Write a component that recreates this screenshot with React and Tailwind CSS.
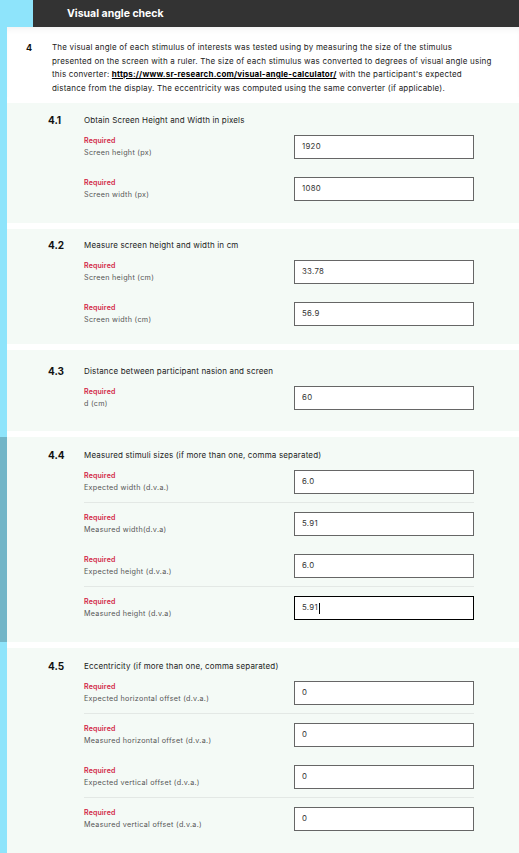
const sections = [
  {
    num: "4.1",
    title: "Obtain Screen Height and Width in pixels",
    items: [
      { label: "Screen height (px)", value: "1920" },
      { label: "Screen width (px)", value: "1080" },
    ],
    dividers: [],
    pt: "pt-[11px]",
    pb: "pb-[13px]",
  },
  {
    num: "4.2",
    title: "Measure screen height and width in cm",
    items: [
      { label: "Screen height (cm)", value: "33.78" },
      { label: "Screen width (cm)", value: "56.9" },
    ],
    dividers: [],
    pt: "pt-[10px]",
    pb: "pb-[9px]",
  },
  {
    num: "4.3",
    title: "Distance between participant nasion and screen",
    items: [{ label: "d (cm)", value: "60" }],
    dividers: [],
    pt: "pt-[15px]",
    pb: "pb-[12px]",
  },
  {
    num: "4.4",
    title: "Measured stimuli sizes (if more than one, comma separated)",
    items: [
      { label: "Expected width (d.v.a.)", value: "6.0" },
      { label: "Measured width(d.v.a)", value: "5.91" },
      { label: "Expected height (d.v.a.)", value: "6.0" },
      { label: "Measured height (d.v.a)", value: "5.91", focused: true },
    ],
    dividers: [0, 2],
    active: true,
    pt: "pt-[12px]",
    pb: "pb-[13px]",
  },
  {
    num: "4.5",
    title: "Eccentricity (if more than one, comma separated)",
    items: [
      { label: "Expected horizontal offset (d.v.a.)", value: "0" },
      { label: "Measured horizontal offset (d.v.a.)", value: "0" },
      { label: "Expected vertical offset (d.v.a.)", value: "0" },
      { label: "Measured vertical offset (d.v.a.)", value: "0" },
    ],
    dividers: [0, 2],
    pt: "pt-[12px]",
    pb: "pb-[24px]",
  },
];

function Item({ item, divider }) {
  return (
    <div
      className={
        "flex items-start pt-[9px] pb-[8px] border-b " +
        (divider ? "border-[#e3e8e5]" : "border-transparent")
      }
    >
      <div className="w-[210px] flex flex-col">
        <div className="text-[7px] leading-[11px] font-semibold tracking-[0.15px] text-[#d21f44]">Required</div>
        <div className="text-[7.2px] leading-[13px] tracking-[0.3px] text-[#555]">{item.label}</div>
      </div>
      <div
        className={
          "w-[180px] h-[24px] bg-white flex items-center pl-[7px] text-[7.8px] tracking-[0.3px] text-[#333] " +
          (item.focused ? "border-[1.5px] border-black" : "border border-[#666]")
        }
      >
        {item.value}
        {item.focused && <span className="inline-block w-px h-[11px] bg-black ml-px" />}
      </div>
    </div>
  );
}

function Section({ s }) {
  return (
    <div
      className={
        "bg-[#f4faf6] flex " +
        s.pt +
        " " +
        s.pb +
        (s.active ? " -ml-[7px] border-l-[7px] border-[#72b5c7]" : "")
      }
    >
      <div className="w-[41px] shrink-0" />
      <div className="w-[36px] shrink-0 text-[10px] font-bold leading-[12px] text-[#111]">{s.num}</div>
      <div className="flex flex-col">
        <div className="text-[8px] leading-[12px] tracking-[0.15px] text-[#222]">{s.title}</div>
        <div className="flex flex-col">
          {s.items.map((it, i) => (
            <Item key={i} item={it} divider={s.dividers.includes(i)} />
          ))}
        </div>
      </div>
    </div>
  );
}

export default function App() {
  return (
    <div className="w-[519px] min-h-[853px] bg-[#8ee4fb] pl-[7px] font-['Inter','Noto_Sans',sans-serif] overflow-hidden">
      <div className="ml-[26px] h-[27px] bg-[#333333] flex items-center pl-[34px]">
        <span className="text-white text-[10.5px] font-bold">Visual angle check</span>
      </div>
      <div className="bg-white flex pt-[14px] pb-[2px] shadow-[inset_0_5px_6px_-3px_rgba(0,0,0,0.06)]">
        <div className="w-[19px] shrink-0" />
        <div className="w-[26px] shrink-0 text-[9px] font-bold leading-[13.5px] text-[#111]">4</div>
        <p className="w-[450px] text-[8px] leading-[13.5px] tracking-[0.2px] text-[#222]">
          The visual angle of each stimulus of interests was tested using by measuring the size of the stimulus
          <br />
          presented on the screen with a ruler. The size of each stimulus was converted to degrees of visual angle using
          <br />
          this converter:{" "}
          <span className="font-bold underline text-black">https://www.sr-research.com/visual-angle-calculator/</span>{" "}
          with the participant's expected
          <br />
          distance from the display. The eccentricity was computed using the same converter (if applicable).
        </p>
      </div>
      <div className="bg-white flex flex-col gap-[6px] pt-[6px]">
        {sections.map((s) => (
          <Section key={s.num} s={s} />
        ))}
      </div>
    </div>
  );
}
